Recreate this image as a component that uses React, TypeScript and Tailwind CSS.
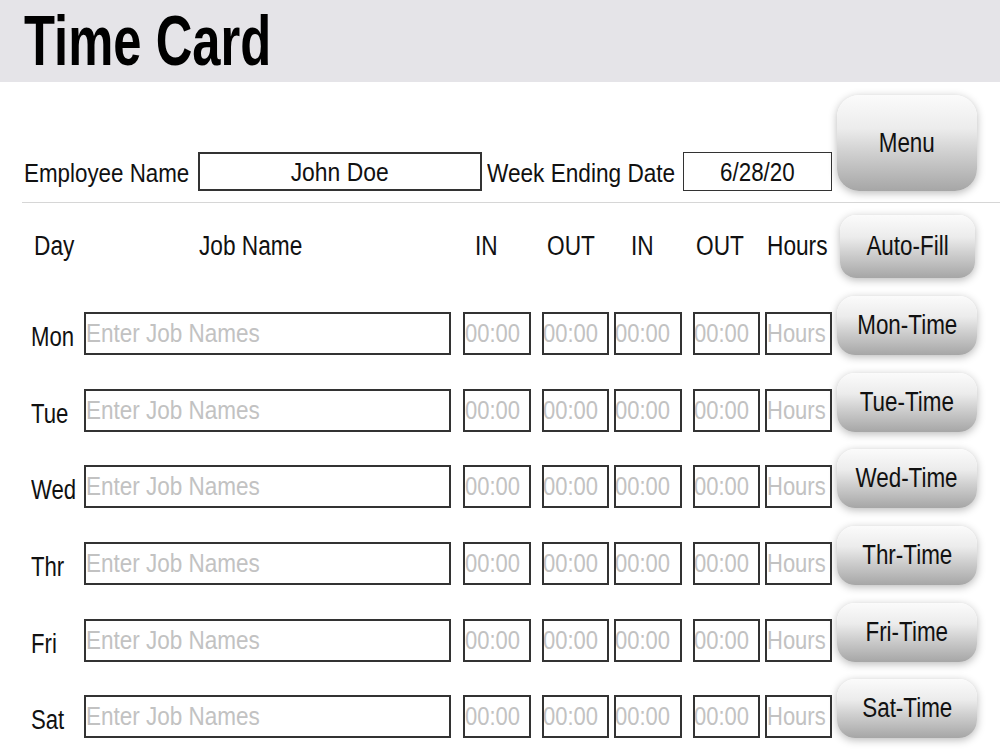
import React from "react";

const days = ["Mon", "Tue", "Wed", "Thr", "Fri", "Sat"];

function Btn({ label, className }: { label: string; className: string }) {
  return (
    <div
      className={
        "flex items-center justify-center bg-[linear-gradient(to_bottom,#fbfbfb_0%,#ececec_35%,#d0d0d0_60%,#a6a6a6_100%)] shadow-[0_2px_9px_rgba(0,0,0,0.28)] " +
        className
      }
    >
      <span className="inline-block whitespace-nowrap text-[27px] leading-none text-[#111] scale-x-[0.83]">
        {label}
      </span>
    </div>
  );
}

function TimeBox({ w, ml, text, shift }: { w: string; ml: string; text: string; shift: string }) {
  return (
    <div className={"h-[43px] border-2 border-[#333] overflow-hidden flex items-center " + w + " " + ml}>
      <span className={"inline-block origin-left whitespace-nowrap text-[25px] leading-none text-[#c2c2c2] scale-x-[0.88] " + shift}>
        {text}
      </span>
    </div>
  );
}

function HeadCell({ w, ml, pl, text }: { w: string; ml: string; pl: string; text: string }) {
  return (
    <div className={"h-[63px] flex items-center " + w + " " + ml + " " + pl}>
      <span className="inline-block origin-left whitespace-nowrap text-[27px] leading-none text-[#111] scale-x-[0.84]">
        {text}
      </span>
    </div>
  );
}

export default function App() {
  return (
    <div className="w-[1000px] h-[750px] bg-white overflow-hidden font-['Liberation_Sans',Arial,sans-serif] text-[#111]">
      {/* Title bar */}
      <div className="h-[82px] bg-[#e5e4e8] flex items-center pl-[24px]">
        <span className="inline-block origin-left whitespace-nowrap text-[70px] font-bold leading-none text-black scale-x-[0.725]">
          Time Card
        </span>
      </div>

      {/* Employee / week row */}
      <div className="flex items-end pt-[13px] pl-[24px]">
        <div className="w-[174px] h-[39px] flex items-center pt-[3px]">
          <span className="inline-block origin-left whitespace-nowrap text-[26px] leading-none scale-x-[0.86]">
            Employee Name
          </span>
        </div>
        <div className="w-[284px] h-[39px] border-2 border-[#333] flex items-center justify-center">
          <span className="inline-block whitespace-nowrap text-[26px] leading-none scale-x-[0.88]">John Doe</span>
        </div>
        <div className="w-[201px] h-[39px] flex items-center pl-[5px] pt-[3px]">
          <span className="inline-block origin-left whitespace-nowrap text-[26px] leading-none scale-x-[0.87]">
            Week Ending Date
          </span>
        </div>
        <div className="w-[149px] h-[39px] border-[1.5px] border-[#333] flex items-center justify-center">
          <span className="inline-block whitespace-nowrap text-[26px] leading-none scale-x-[0.86]">6/28/20</span>
        </div>
        <Btn label="Menu" className="ml-[5px] w-[140px] h-[96px] rounded-[22px]" />
      </div>

      {/* Separator */}
      <div className="ml-[22px] mt-[11px] h-[1px] bg-[#d6d6d6]" />

      {/* Column header row */}
      <div className="mt-[12px] h-[81px] flex items-start">
        <HeadCell w="w-[84px]" ml="" pl="pl-[34px]" text="Day" />
        <HeadCell w="w-[367px]" ml="" pl="pl-[115px]" text="Job Name" />
        <HeadCell w="w-[68px]" ml="ml-[12px]" pl="pl-[12px]" text="IN" />
        <HeadCell w="w-[67px]" ml="ml-[11px]" pl="pl-[5px]" text="OUT" />
        <HeadCell w="w-[68px]" ml="ml-[5px]" pl="pl-[17px]" text="IN" />
        <HeadCell w="w-[67px]" ml="ml-[11px]" pl="pl-[3px]" text="OUT" />
        <HeadCell w="w-[67px]" ml="ml-[5px]" pl="pl-[2px]" text="Hours" />
        <Btn label="Auto-Fill" className="ml-[8px] w-[135px] h-[63px] rounded-[16px]" />
      </div>

      {/* Day rows */}
      {days.map((d) => (
        <div key={d} className="h-[76.7px] flex items-start">
          <div className="w-[84px] h-[43px] mt-[16px] flex items-center pl-[31px] pt-[8px]">
            <span className="inline-block origin-left whitespace-nowrap text-[27px] leading-none scale-x-[0.82]">{d}</span>
          </div>
          <div className="w-[367px] h-[43px] mt-[16px] border-2 border-[#333] flex items-center">
            <span className="inline-block origin-left whitespace-nowrap text-[25px] leading-none text-[#c2c2c2] scale-x-[0.9]">
              Enter Job Names
            </span>
          </div>
          <div className="mt-[16px] flex">
            <TimeBox w="w-[68px]" ml="ml-[12px]" text="00:00" shift="" />
            <TimeBox w="w-[67px]" ml="ml-[11px]" text="00:00" shift="-ml-[1px]" />
            <TimeBox w="w-[68px]" ml="ml-[5px]" text="00:00" shift="-ml-[1px]" />
            <TimeBox w="w-[67px]" ml="ml-[11px]" text="00:00" shift="-ml-[1px]" />
            <TimeBox w="w-[67px]" ml="ml-[5px]" text="Hours" shift="" />
          </div>
          <Btn label={d + "-Time"} className="ml-[5px] w-[140px] h-[59px] rounded-[18px]" />
        </div>
      ))}
    </div>
  );
}
